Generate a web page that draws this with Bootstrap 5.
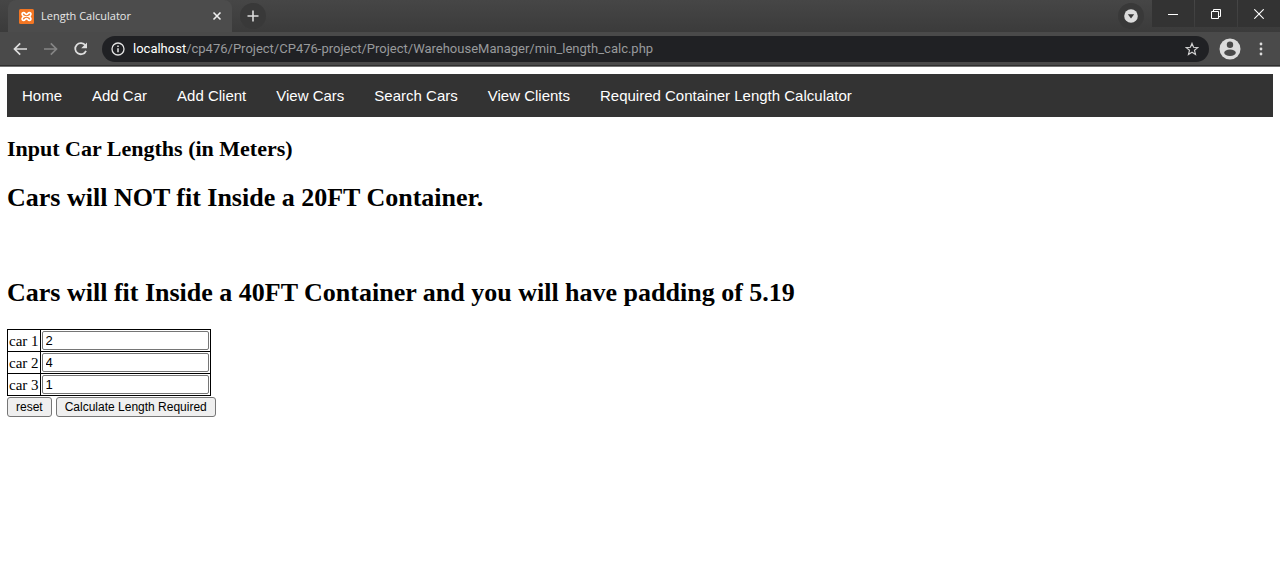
<!DOCTYPE html>
<html lang="en">
<head>
<meta charset="utf-8">
<meta name="viewport" content="width=device-width, initial-scale=1">
<title>Length Calculator</title>
<link rel="stylesheet" href="https://cdn.jsdelivr.net/npm/bootstrap@5.3.0/dist/css/bootstrap.min.css">
<style>
  body { background: #fff; color: #000; font-family: "Liberation Serif", serif; font-size: 15px; line-height: 18px; }
  svg { display: block; flex: none; }

  /* Browser window */
  .chrome { font-family: "Open Sans", "Noto Sans", sans-serif; color: #e8e8e8; }
  .chrome button { background: none; border: 0; padding: 0; color: #d8d8d8; display: flex; align-items: center; justify-content: center; flex: none; }
  .tab-strip { height: 32px; background: linear-gradient(#464646, #3b3b3b); padding-left: 8px; }
  .page-tab { width: 224px; height: 32px; background: #4c4c4c; border-radius: 8px 8px 0 0; font-size: 11px; line-height: 16px; padding: 0 10px 0 11px; gap: 7px; }
  .chrome .round-btn { width: 26px; height: 26px; border-radius: 50%; background: #393939; }
  .chrome .window-btn { width: 42px; height: 27px; background: #333; }
  .window-buttons { gap: 1px; }
  .tool-bar { height: 35px; background: #4a4a4a; border-bottom: 1px solid #747474; box-shadow: inset 0 -1px #2f2f2f; padding: 0 15px 1px 12px; }
  .chrome .nav-btn { width: 30px; height: 26px; }
  .address { height: 26px; border-radius: 13px; background: #202124; padding: 0 10px 0 9px; gap: 8px; margin: 0 10px 0 0; }
  .address-text { font-family: Roboto, sans-serif; font-size: 13px; line-height: 18px; color: #989a9c; text-decoration: none; white-space: nowrap; }
  .address-text span { color: #fff; }

  /* Page */
  .page { padding: 7px 7px 8px; }
  .site-nav { background: #333; font-family: "Liberation Sans", sans-serif; padding: 0; }
  .site-nav .navbar-nav .nav-link { color: #fff; font-size: 15px; line-height: 17px; padding: 13px 15px; }
  .page-heading { font-size: 22px; line-height: 26px; font-weight: 700; margin: 19px 0 21px; }
  .result { font-size: 26px; line-height: 30px; font-weight: 700; margin: 0; }
  .result-gap { margin-top: 65px; margin-bottom: 21px; }
  .lengths { border-collapse: collapse; }
  .lengths th, .lengths td { border: 1px solid #000; font-weight: 400; padding: 1px; }
  .lengths label { display: block; }
  .lengths input { display: block; width: 167px; height: 19px; border: 1px solid #767676; border-radius: 2px; padding: 1px 3px; font: 13px/15px "Liberation Sans", sans-serif; color: #000; background: #fff; }
  .actions { padding-top: 1px; }
  .actions button { height: 20px; border: 1px solid #767676; border-radius: 3px; background: #efefef; color: #000; font: 12px/16px "Liberation Sans", sans-serif; padding: 1px 8px; }
</style>
</head>
<body>
<header class="chrome">
  <div class="tab-strip d-flex">
    <div class="page-tab d-flex align-items-center">
      <svg width="15" height="15" viewBox="0 0 15 15"><rect width="15" height="15" rx="1.5" fill="#f37623"/><path d="M5.300 7.500C2.600 6.700 2.400 3.700 4.700 3.700c1.400 0 1.500 1.700 2.800 1.700s1.400-1.700 2.800-1.700c2.300 0 2.100 3-.6 3.800 2.700.8 2.900 3.800.6 3.800-1.400 0-1.500-1.700-2.800-1.700s-1.400 1.700-2.800 1.700c-2.300 0-2.100-3 .6-3.800z" fill="none" stroke="#fff" stroke-width="1.700"/></svg>
      <span class="flex-grow-1">Length Calculator</span>
      <button type="button" aria-label="Close tab"><svg width="10" height="10" viewBox="0 0 10 10"><path d="M1.5 1.5l7 7m0-7l-7 7" stroke="#eee" stroke-width="1.6"/></svg></button>
    </div>
    <button type="button" class="round-btn align-self-center ms-2" aria-label="New tab"><svg width="12" height="12" viewBox="0 0 12 12"><path d="M6 .5v11M.5 6h11" stroke="#ddd" stroke-width="1.6"/></svg></button>
    <button type="button" class="round-btn align-self-center ms-auto me-2" aria-label="Search tabs"><svg width="14" height="14" viewBox="0 0 14 14"><circle cx="7" cy="7" r="6.8" fill="#dcdcdc"/><path d="M3.8 5.3h6.4L7 9.5z" fill="#383838"/></svg></button>
    <div class="window-buttons d-flex">
      <button type="button" class="window-btn" aria-label="Minimize"><svg width="10" height="10" viewBox="0 0 10 10"><path d="M0 5.5h10" stroke="#fff"/></svg></button>
      <button type="button" class="window-btn" aria-label="Restore"><svg width="10" height="10" viewBox="0 0 10 10"><path d="M.5 2.5h7v7h-7zM2.5 2V.5h7v7H8" fill="none" stroke="#fff"/></svg></button>
      <button type="button" class="window-btn" aria-label="Close"><svg width="10" height="10" viewBox="0 0 10 10"><path d="M.3.3l9.4 9.4m0-9.4L.3 9.7" stroke="#fff" stroke-width="1.1"/></svg></button>
    </div>
  </div>
  <div class="tool-bar d-flex align-items-center">
    <button type="button" class="nav-btn justify-content-start" aria-label="Back"><svg width="16" height="14" viewBox="0 0 16 14"><path d="M15 7H3M8.2 1.3L2.5 7l5.7 5.7" fill="none" stroke="#dedede" stroke-width="1.7"/></svg></button>
    <button type="button" class="nav-btn justify-content-start" aria-label="Forward"><svg width="16" height="14" viewBox="0 0 16 14"><path d="M2 7h12M8.8 1.3L14.5 7l-5.7 5.7" fill="none" stroke="#858585" stroke-width="1.7"/></svg></button>
    <button type="button" class="nav-btn justify-content-start" aria-label="Reload"><svg width="17" height="16" viewBox="0 0 17 16"><path d="M13.4 4.4A5.6 5.6 0 1 0 14 9.8" fill="none" stroke="#dedede" stroke-width="1.8"/><path d="M15 1.5v5.8H9.2z" fill="#dedede"/></svg></button>
    <div class="address d-flex align-items-center flex-grow-1">
      <svg width="14" height="14" viewBox="0 0 14 14"><circle cx="7" cy="7" r="6" fill="none" stroke="#e4e4e4" stroke-width="1.3"/><path d="M7 6.2v4M7 3.6v1.5" stroke="#e4e4e4" stroke-width="1.5"/></svg>
      <a class="address-text flex-grow-1" href="#"><span>localhost</span>/cp476/Project/CP476-project/Project/WarehouseManager/min_length_calc.php</a>
      <button type="button" aria-label="Bookmark"><svg width="14" height="14" viewBox="0 0 14 14"><path d="M7 1.4l1.6 3.9 4.1.3-3.2 2.7 1 4.1L7 10.2l-3.5 2.2 1-4.1L1.3 5.6l4.1-.3z" fill="none" stroke="#d0d0d0" stroke-width="1.2"/></svg></button>
    </div>
    <button type="button" aria-label="Profile"><svg width="22" height="22" viewBox="0 0 22 22"><circle cx="11" cy="11" r="10.5" fill="#dcdcdc"/><circle cx="11" cy="6.8" r="3.2" fill="#4a4a4a"/><ellipse cx="11" cy="14.8" rx="5.8" ry="3.2" fill="#4a4a4a"/></svg></button>
    <button type="button" class="ms-3" aria-label="Menu"><svg width="8" height="14" viewBox="0 0 8 14"><g fill="#dcdcdc"><circle cx="4" cy="2" r="1.4"/><circle cx="4" cy="7" r="1.4"/><circle cx="4" cy="12" r="1.4"/></g></svg></button>
  </div>
</header>

<main class="page">
  <nav class="site-nav navbar navbar-expand">
    <ul class="navbar-nav">
      <li class="nav-item"><a class="nav-link" href="#">Home</a></li>
      <li class="nav-item"><a class="nav-link" href="#">Add Car</a></li>
      <li class="nav-item"><a class="nav-link" href="#">Add Client</a></li>
      <li class="nav-item"><a class="nav-link" href="#">View Cars</a></li>
      <li class="nav-item"><a class="nav-link" href="#">Search Cars</a></li>
      <li class="nav-item"><a class="nav-link" href="#">View Clients</a></li>
      <li class="nav-item"><a class="nav-link" href="#">Required Container Length Calculator</a></li>
    </ul>
  </nav>
  <h2 class="page-heading">Input Car Lengths (in Meters)</h2>
  <h1 class="result">Cars will NOT fit Inside a 20FT Container.</h1>
  <h1 class="result result-gap">Cars will fit Inside a 40FT Container and you will have padding of 5.19</h1>
  <form>
    <table class="lengths">
      <tbody>
        <tr><th scope="row"><label for="car1">car 1</label></th><td><input type="text" id="car1" value="2"></td></tr>
        <tr><th scope="row"><label for="car2">car 2</label></th><td><input type="text" id="car2" value="4"></td></tr>
        <tr><th scope="row"><label for="car3">car 3</label></th><td><input type="text" id="car3" value="1"></td></tr>
      </tbody>
    </table>
    <div class="actions d-flex gap-1">
      <button type="reset">reset</button>
      <button type="button">Calculate Length Required</button>
    </div>
  </form>
</main>
<script src="https://cdn.jsdelivr.net/npm/bootstrap@5.3.0/dist/js/bootstrap.bundle.min.js"></script>
</body>
</html>
